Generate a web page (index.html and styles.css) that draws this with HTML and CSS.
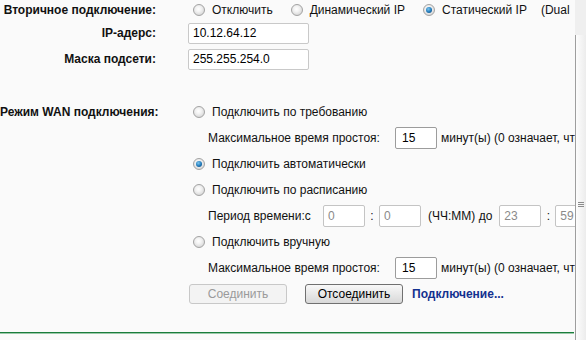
FILE: index.html
```
<!DOCTYPE html>
<html lang="ru">
<head>
<meta charset="utf-8">
<title>WAN</title>
<link rel="stylesheet" href="styles.css">
</head>
<body>
<div class="window">
  <div class="content">
    <div class="row first">
      <div class="lbl">Вторичное подключение:</div>
      <div class="val">
        <span class="opt"><span class="radio"></span><span class="otext">Отключить</span></span>
        <span class="opt"><span class="radio"></span><span class="otext">Динамический IP</span></span>
        <span class="opt"><span class="radio on"></span><span class="otext">Статический IP</span></span>
        <span class="note">(Dual</span>
      </div>
    </div>
    <div class="row">
      <div class="lbl">IP-адерс:</div>
      <div class="val"><span class="field">10.12.64.12</span></div>
    </div>
    <div class="row">
      <div class="lbl">Маска подсети:</div>
      <div class="val"><span class="field">255.255.254.0</span></div>
    </div>

    <div class="section">
      <div class="lbl">Режим WAN подключения:</div>
      <div class="col">
        <div class="line"><span class="opt"><span class="radio"></span><span class="otext">Подключить по требованию</span></span></div>
        <div class="line sub"><span class="sublbl">Максимальное время простоя:</span><span class="num">15</span><span class="after">минут(ы) (0 означает, что соединение активно всегда)</span></div>
        <div class="line"><span class="opt"><span class="radio on"></span><span class="otext">Подключить автоматически</span></span></div>
        <div class="line"><span class="opt"><span class="radio"></span><span class="otext">Подключить по расписанию</span></span></div>
        <div class="line sub"><span class="sublbl period">Период времени:с</span><span class="num dim">0</span><span class="colon">:</span><span class="num dim">0</span><span class="hhmm">(ЧЧ:ММ) до</span><span class="num dim">23</span><span class="colon">:</span><span class="num dim">59</span></div>
        <div class="line"><span class="opt"><span class="radio"></span><span class="otext">Подключить вручную</span></span></div>
        <div class="line sub"><span class="sublbl">Максимальное время простоя:</span><span class="num">15</span><span class="after">минут(ы) (0 означает, что соединение активно всегда)</span></div>
        <div class="line buttons"><button class="btn off" type="button" disabled>Соединить</button><button class="btn" type="button">Отсоединить</button><a class="link" href="#">Подключение...</a></div>
      </div>
    </div>
    <div class="rule"></div>
  </div>
  <div class="scroll">
    <div class="track-top"></div>
    <div class="thumb"><span class="grip"></span></div>
  </div>
</div>
</body>
</html>
```
FILE: styles.css
```
* { box-sizing: border-box; }
html, body { margin: 0; padding: 0; }
body {
  background: #fafafa;
  font-family: "Liberation Sans", Arial, sans-serif;
  font-size: 12px;
  color: #111;
}
.window { display: flex; height: 340px; overflow: hidden; }
.content { width: 575px; flex: none; overflow: hidden; white-space: nowrap; padding-right: 1px; }
.row { display: flex; align-items: center; height: 26px; }
.row.first { height: 20px; }
.lbl { width: 156px; flex: none; text-align: right; font-weight: bold; }
.val { margin-left: 32px; display: flex; align-items: center; }
.opt { display: inline-flex; align-items: center; }
.val .opt:first-child { margin-left: 5px; }
.val .opt { margin-right: 18px; }
.val .opt:nth-child(3) { margin-right: 14px; }
.otext { margin-left: 7px; }
.radio {
  display: inline-block; width: 12px; height: 12px; border-radius: 50%;
  border: 1px solid #a3a3a3;
  background: radial-gradient(circle at 45% 40%, #ffffff 0, #f2f2f2 35%, #c9c9c9 100%);
  position: relative; flex: none;
}
.radio.on::after {
  content: ""; position: absolute; left: 2px; top: 2px; width: 6px; height: 6px; border-radius: 50%;
  background: radial-gradient(circle at 40% 35%, #7cc6f0 0, #1f78b8 55%, #0b3e6e 100%);
}
.field {
  display: inline-block; width: 121px; height: 21px; line-height: 19px;
  border: 1px solid #c9c9c9; border-radius: 2px; background: #fff;
  padding-left: 4px; color: #000;
}
.section { display: flex; margin-top: 27px; }
.section .lbl { line-height: 26px; height: 26px; }
.col { margin-left: 32px; }
.line { display: flex; align-items: center; height: 26px; }
.line > .opt { margin-left: 5px; }
.sub { padding-left: 20px; }
.sublbl { width: 187px; flex: none; }
.sublbl.period { width: 115px; }
.num {
  display: inline-block; width: 42px; height: 22px; line-height: 20px; flex: none;
  border: 1px solid #9c9c9c; border-radius: 2px; background: #fff;
  padding-left: 6px; color: #000;
}
.num.dim { border-color: #c4c4c4; color: #8a8a8a; padding-left: 4px; }
.after { margin-left: 4px; }
.colon { width: 14px; text-align: center; flex: none; }
.hhmm { margin: 0 7px; }
.buttons { padding-left: 1px; }
.btn {
  width: 98px; height: 20px; padding: 0; margin: 0;
  font-family: "Liberation Sans", Arial, sans-serif; font-size: 12px;
  border: 1px solid #707070; border-radius: 3px; color: #000;
  background: linear-gradient(#f8f8f8, #e8e8e8 50%, #d8d8d8);
}
.btn.off {
  border-color: #c8c8c8; color: #9a9a9a; background: #f3f3f3; margin-right: 18px;
}
.link { margin-left: 9px; color: #13318f; font-weight: bold; text-decoration: none; }
.rule { margin-top: 25px; height: 1px; background: #1a7d3c; box-shadow: 0 1px 0 rgba(40, 140, 70, 0.45); }
.scroll { width: 11px; flex: none; display: flex; flex-direction: column; }
.track-top { height: 35px; background: #efefef; }
.thumb {
  flex: 1; border-left: 1px solid #9e9e9e; position: relative;
  background: linear-gradient(90deg, #fdfdfd, #ececec);
}
.grip {
  position: absolute; left: 2px; top: 167px; width: 6px; height: 6px;
  background: repeating-linear-gradient(#8c8c8c 0 1px, transparent 1px 2px);
}
```
